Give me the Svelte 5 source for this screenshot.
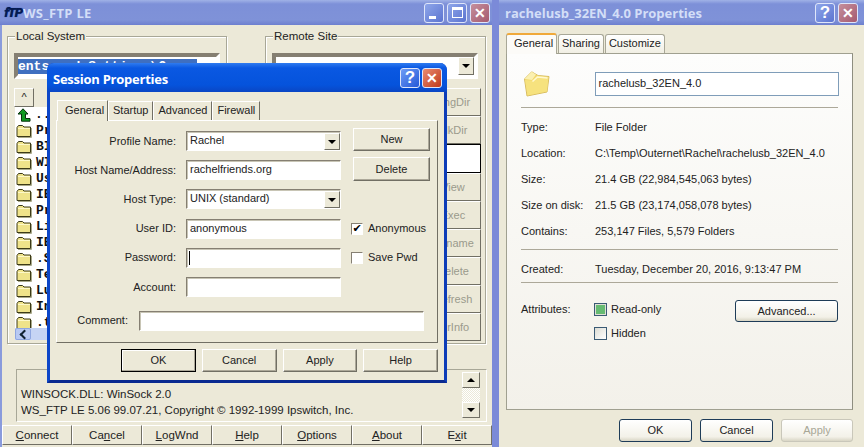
<script>
  const rows = ['..','Pr','BI','WI','Us','IE','Pr','Li','IE','.S','Te','Lu','In','.t'];
  const remoteBtns = ['MkDir','View','Exec','Rename','Delete','Refresh','DirInfo'];
  const actions = [
    ['','C','onnect'],['Ca','n','cel'],['','L','ogWnd'],['','H','elp'],['','O','ptions'],['','A','bout'],['E','x','it']
  ];
  const fields = [
    { label:'Profile Name:', value:'Rachel', kind:'combo' },
    { label:'Host Name/Address:', value:'rachelfriends.org', kind:'text' },
    { label:'Host Type:', value:'UNIX (standard)', kind:'combo' },
    { label:'User ID:', value:'anonymous', kind:'text' },
    { label:'Password:', value:'', kind:'caret' },
    { label:'Account:', value:'', kind:'text' }
  ];
  const info = [
    ['Type:','File Folder'],
    ['Location:','C:\\Temp\\Outernet\\Rachel\\rachelusb_32EN_4.0'],
    ['Size:','21.4 GB (22,984,545,063 bytes)'],
    ['Size on disk:','21.5 GB (23,174,058,078 bytes)'],
    ['Contains:','253,147 Files, 5,579 Folders']
  ];
</script>

{#snippet folder(w, h)}
  <svg width={w} height={h} viewBox="0 0 16 14" class="folder">
    <path d="M1 3.5 L2.5 1.5 H6.5 L8 3 H14.5 V12.5 H1 Z" fill="#efe38a" stroke="#3c3a18" stroke-width="1"/>
    <path d="M2 4.5 H14" stroke="#fdf8c8" stroke-width="1"/>
    <path d="M15.5 4 V13.5 H2" fill="none" stroke="#a9a98a" stroke-width="1"/>
  </svg>
{/snippet}

{#snippet bigFolder()}
  <svg width="27" height="26" viewBox="0 0 27 26" class="folder">
    <path d="M1.5 8 L8.7 .8 L15 4.5 L26 5.5 L24 21 L4 25 Z" fill="#f0d568" stroke="#d8bd62" stroke-width="1"/>
    <path d="M1.5 8 L8.7 .8 L13 3.5 L9 9 Z" fill="#fbf0b0"/>
    <path d="M2 9 L9 9.5 L14 4.5 L25.5 6 L24 20.5 L4.5 24.5 Z" fill="#f6e27e"/>
    <path d="M9.5 10.5 L14.5 6 L24.5 7" fill="none" stroke="#fff8d0" stroke-width="1.5"/>
  </svg>
{/snippet}

{#snippet arrow(dir)}
  <span class={'tri ' + dir}></span>
{/snippet}

<div class="desktop">
  <section class="ftp">
    <header class="title inactive">
      <span class="ftpicon">fTP</span>
      <span class="title-text ws">WS_FTP LE</span>
      <div class="ctrls">
        <span class="cb blue"><i class="min"></i></span>
        <span class="cb blue"><i class="max"></i></span>
        <span class="cb red">✕</span>
      </div>
    </header>
    <div class="ftp-body">
      <div class="panes">
        <div class="group local">
          <span class="legend">Local System</span>
          <div class="dos-combo"><span class="sel">ents and Settings\Owner</span></div>
          <button class="mini">^</button>
          <ul class="files">
            {#each rows as r, i}
              <li>
                {#if i === 0}
                  <svg width="15" height="14" viewBox="0 0 15 14" class="folder"><path d="M7 .8 L12 6 H9.5 V10.5 H14 V13.2 H5.5 V6 H2 Z" fill="#0f9a20" stroke="#07300c" stroke-width="1"/></svg>
                {:else}
                  {@render folder(16, 14)}
                {/if}
                <b>{r}</b>
              </li>
            {/each}
          </ul>
          <div class="hscroll"><span class="xpbtn"></span></div>
        </div>
        <div class="group remote">
          <span class="legend">Remote Site</span>
          <div class="dos-combo plain">
            <span class="dropbtn">{@render arrow('down')}</span>
          </div>
          <div class="side">
            <button class="sbtn">ChgDir</button>
            {#each remoteBtns as b, i}
              {#if i === 1}<div class="blackbox"></div>{/if}
              <button class="sbtn">{b}</button>
            {/each}
          </div>
        </div>
      </div>
      <div class="log">
        <div class="log-lines">
          <p>WINSOCK.DLL: WinSock 2.0</p>
          <p>WS_FTP LE 5.06 99.07.21, Copyright © 1992-1999 Ipswitch, Inc.</p>
        </div>
        <div class="log-scroll">
          <span class="lbtn">{@render arrow('up')}</span>
          <span class="ltrack"></span>
          <span class="lbtn">{@render arrow('down')}</span>
        </div>
      </div>
      <nav class="actions">
        {#each actions as a}
          <button class="act">{a[0]}<u>{a[1]}</u>{a[2]}</button>
        {/each}
      </nav>
    </div>

    <div class="dialog">
      <header class="dtitle">
        <span class="dtitle-text">Session Properties</span>
        <div class="ctrls dctrls">
          <span class="cb dhelp">?</span>
          <span class="cb dclose">✕</span>
        </div>
      </header>
      <div class="dbody">
        <div class="dtabs">
          <span class="dtab on">General</span>
          <span class="dtab">Startup</span>
          <span class="dtab">Advanced</span>
          <span class="dtab">Firewall</span>
        </div>
        <div class="dpage">
          <div class="form">
            {#each fields as f}
              <label class="lbl">{f.label}</label>
              <div class="inp">
                {#if f.kind === 'caret'}<i class="caret"></i>{/if}
                {f.value}
                {#if f.kind === 'combo'}<span class="dropbtn small">{@render arrow('down')}</span>{/if}
              </div>
            {/each}
          </div>
          <div class="dside">
            <button class="w98 new">New</button>
            <button class="w98 del">Delete</button>
            <div class="chk first"><span class="box">✔</span>Anonymous</div>
            <div class="chk"><span class="box"></span>Save Pwd</div>
          </div>
          <div class="comment">
            <label class="lbl">Comment:</label>
            <div class="inp wide"></div>
          </div>
        </div>
        <div class="dbtns">
          <button class="w98 ok">OK</button>
          <button class="w98">Cancel</button>
          <button class="w98">Apply</button>
          <button class="w98">Help</button>
        </div>
      </div>
    </div>
  </section>

  <section class="props">
    <header class="title inactive">
      <span class="title-text pr">rachelusb_32EN_4.0 Properties</span>
      <div class="ctrls">
        <span class="cb blue q">?</span>
        <span class="cb red">✕</span>
      </div>
    </header>
    <div class="props-body">
      <div class="ptabs">
        <span class="ptab on">General</span>
        <span class="ptab">Sharing</span>
        <span class="ptab">Customize</span>
      </div>
      <div class="ppage">
        <div class="pname">
          <span class="bigf">{@render bigFolder()}</span>
          <div class="pinput">rachelusb_32EN_4.0</div>
        </div>
        <hr class="first-hr" />
        <dl class="info">
          {#each info as row}
            <dt>{row[0]}</dt><dd>{row[1]}</dd>
          {/each}
        </dl>
        <hr class="h2" />
        <dl class="info created">
          <dt>Created:</dt><dd>Tuesday, December 20, 2016, 9:13:47 PM</dd>
        </dl>
        <hr class="h3" />
        <div class="attrs">
          <span class="attr-l">Attributes:</span>
          <div class="attr-c">
            <div class="xchk"><span class="xbox on"></span>Read-only</div>
            <div class="xchk h"><span class="xbox"></span>Hidden</div>
          </div>
          <button class="xp adv">Advanced...</button>
        </div>
      </div>
      <div class="pbtns">
        <button class="xp b">OK</button>
        <button class="xp b">Cancel</button>
        <button class="xp b dis">Apply</button>
      </div>
    </div>
  </section>
</div>

<style>
  :global(body) { margin: 0; }
  * { box-sizing: border-box; }
  .desktop {
    width: 864px; height: 447px; overflow: hidden; display: flex;
    background: #7b8ad8;
    font: 11px/13px "Liberation Sans", Arial, sans-serif; color: #222;
  }
  button { font: inherit; color: inherit; padding: 0; margin: 0; }
  .ftp { position: relative; width: 492px; height: 447px; flex: none; }
  .props { width: 365px; margin-left: 7px; flex: none; height: 447px; }

  .title { height: 25px; display: flex; align-items: center; position: relative; }
  .inactive { background: linear-gradient(#a0b2e6 0, #7d90d8 4px, #7f92d8 20px, #6d7fcf 25px); }
  .ftp .title { padding-left: 4px; }
  .ftpicon {
    font: italic 900 12px/14px "DejaVu Sans", sans-serif; color: #061a50; width: 19px; flex: none; letter-spacing: -1.5px;
    text-shadow: 0 0 1px #1a4ab0;
  }
  .title-text { font: bold 13px/16px "Open Sans", "Liberation Sans", sans-serif; color: #d3def7; }
  .ws { letter-spacing: .3px; }
  .pr { margin-left: 6px; }
  .ctrls { margin-left: auto; display: flex; gap: 3px; padding-right: 2px; }
  .cb {
    width: 20px; height: 20px; border-radius: 3px; border: 1px solid #dfe6fa;
    display: flex; align-items: center; justify-content: center; position: relative;
    color: #fff; font: bold 14px/1 "Liberation Sans", sans-serif;
  }
  .cb.blue { background: linear-gradient(135deg, #8ea6ea, #5c74d0); }
  .cb.q { font-size: 17px; }
  .cb.red { background: linear-gradient(135deg, #c58f9c, #a55a70); }
  .min { position: absolute; left: 4px; bottom: 3px; width: 7px; height: 3px; background: #fff; }
  .max { position: absolute; left: 4px; top: 3px; width: 11px; height: 11px; border: 1px solid #fff; border-top-width: 3px; }
  .props .ctrls { padding-right: 6px; }

  .ftp-body { height: 422px; background: #ece9d8; border-left: 2px solid #8a9bdc; }
  .panes { display: flex; padding: 11px 0 0 5px; gap: 38px; }
  .group {
    position: relative; height: 308px; border: 1px solid #a8a797; box-shadow: inset 1px 1px 0 #fff, 1px 1px 0 #fff;
    padding: 16px 6px 0 6px;
  }
  .local { width: 220px; }
  .remote { width: 221px; }
  .legend { position: absolute; left: 7px; top: -7px; background: #ece9d8; padding: 0 1px; font-size: 11.5px; }
  .dos-combo {
    height: 26px; width: 206px; border: 4px solid; border-color: #857f72 #fff #fff #857f72;
    background: #fff; position: relative; padding: 1px 0 0 0;
  }
  .dos-combo.plain { height: 26px; }
  .sel { display: block; width: 179px; height: 15px; margin: 1px 0 0 0; overflow: hidden;
    background: #3f6fc0; color: #fff; font: bold 13px/15px "Liberation Mono", monospace; white-space: nowrap; }
  .dropbtn {
    position: absolute; right: 0; top: 0; width: 16px; height: 18px; background: #ece9d8;
    border: 1px solid; border-color: #fff #716f64 #716f64 #fff;
    display: flex; align-items: center; justify-content: center;
  }
  .tri { display: block; width: 0; height: 0; border-left: 4px solid transparent; border-right: 4px solid transparent; }
  .tri.down { border-top: 4px solid #000; }
  .tri.up { border-bottom: 4px solid #000; }
  .mini {
    display: block; margin-top: 9px; width: 20px; height: 19px; background: #ece9d8; border: 1px solid;
    border-color: #fff #716f64 #716f64 #fff; font-size: 11px; line-height: 15px;
  }
  .files { list-style: none; margin: 0 0 0 1px; padding: 0; background: #fff; height: 221px; width: 190px; overflow: hidden; }
  .files li { height: 16px; display: flex; align-items: center; gap: 4px; padding-left: 1px; font: bold 13px/16px "Liberation Mono", monospace; color: #111; }
  .folder { flex: none; display: block; }
  .hscroll { margin-left: 1px; height: 12px; width: 190px; background: #c6d4f4; }
  .xpbtn { display: block; width: 16px; height: 12px; background: #b8c9f2; border: 1px solid #8ea6e0; border-radius: 2px; position: relative; }
  .xpbtn::after { content: ''; position: absolute; left: 5px; top: 2px; width: 5px; height: 5px; border-left: 2px solid #123; border-bottom: 2px solid #123; transform: rotate(45deg); }

  .side { margin: 9px 0 0 145px; display: flex; flex-direction: column; width: 64px; }
  .sbtn {
    height: 28px; flex: none; background: #ece9d8; border: 1px solid; border-color: #fff #716f64 #716f64 #fff;
    color: #9a9a8c; font-size: 11px; width: 64px; white-space: nowrap; text-align: center; padding-left: 8px;
  }
  .blackbox { height: 29px; background: #fff; border: 1px solid #000; flex: none; }

  .log {
    margin: 25px 0 0 14px; width: 471px; height: 53px; position: relative;
    border: 1px solid; border-color: #a8a797 #fff #fff #a8a797;
    display: flex; justify-content: space-between;
  }
  .log-lines { padding-top: 18px; padding-left: 4px; font-size: 11.5px; }
  .log-lines p { margin: 0 0 3px; line-height: 13px; white-space: nowrap; }
  .log-scroll { width: 18px; margin: 2px 6px 0 0; display: flex; flex-direction: column; }
  .lbtn { height: 16px; background: #ece9d8; border: 1px solid; border-color: #fff #716f64 #716f64 #fff; display: flex; align-items: center; justify-content: center; flex: none; }
  .ltrack { height: 14px; background: repeating-conic-gradient(#fff 0 25%, #ece9d8 0 50%) 0 0 / 2px 2px; flex: none; }
  .actions { display: flex; margin-top: 3px; height: 20px; }
  .act {
    width: 70px; height: 20px; background: #ece9d8; border: 1px solid; border-color: #fff #716f64 #716f64 #fff; font-size: 11.5px; flex: none;
  }

  .dialog {
    position: absolute; left: 47px; top: 63px; width: 400px; height: 320px;
    border-radius: 7px 7px 0 0; background: #0a3ec0; border: 3px solid; border-top: 0; border-color: #0d46c8 #0d3cb8 #0a2a90 #0d46c8;
    display: flex; flex-direction: column;
  }
  .dtitle {
    height: 29px; flex: none; display: flex; align-items: center; margin: 0 -3px; padding-left: 6px;
    background: linear-gradient(#2f7bf0 0, #0a58e2 5px, #0553dc 22px, #0a46c4 29px); border-radius: 7px 7px 0 0;
  }
  .dtitle-text { font: bold 13px/16px "Open Sans", "Liberation Sans", sans-serif; color: #fff; letter-spacing: -.25px; position: relative; top: 1px; }
  .dctrls { padding-right: 5px; gap: 2px; }
  .dhelp { background: linear-gradient(135deg, #6e9cf5, #2558d8); font-size: 17px; }
  .dclose { background: linear-gradient(135deg, #e88b70, #c03a1c); }
  .dbody { flex: 1; background: #ece9d8; padding: 8px 6px 0 6px; position: relative; }
  .dtabs { display: flex; height: 20px; align-items: flex-end; padding-left: 1px; }
  .dtab {
    height: 19px; padding: 2px 4px 0; border: 1px solid; border-bottom: 0; border-color: #fff #716f64 #fff #fff; background: #ece9d8;
  }
  .dtab.on { height: 21px; margin-bottom: -1px; position: relative; z-index: 1; padding: 3px 7px; width: 51px; }
  .dpage {
    height: 223px; border: 1px solid; border-color: #fff #716f64 #716f64 #fff; position: relative;
    display: grid; grid-template-columns: 281px 1fr; grid-template-rows: 182px 1fr;
  }
  .form {
    display: grid; grid-template-columns: 119px 155px; column-gap: 10px; row-gap: 9px;
    grid-auto-rows: 20.2px; padding-top: 10px; align-items: center;
  }
  .lbl { text-align: right; white-space: nowrap; }
  .inp {
    height: 20px; background: #fff; border: 1px solid; border-color: #857f72 #fff #fff #857f72; position: relative;
    padding: 2px 0 0 3px; box-shadow: inset 1px 1px 0 #c8c5b5;
  }
  .dropbtn.small { right: 0; top: 1px; height: 17px; }
  .caret { position: absolute; left: 2px; top: 2px; height: 14px; width: 1px; background: #000; display: block; }
  .dside { padding: 7px 0 0 15px; }
  .w98 {
    display: block; background: #ece9d8; border: 1px solid; border-color: #fff #716f64 #716f64 #fff;
    box-shadow: inset -1px -1px 0 #aca899; text-align: center;
  }
  .new { width: 77px; height: 23px; }
  .del { width: 77px; height: 24px; margin-top: 6px; }
  .chk { display: flex; align-items: center; gap: 5px; margin-left: -2px; height: 13px; white-space: nowrap; }
  .chk.first { margin-top: 41px; }
  .box {
    width: 12px; height: 12px; background: #fff; border: 1px solid; border-color: #857f72 #fff #fff #857f72;
    font: 11px/10px "DejaVu Sans", sans-serif; color: #000; text-align: center; flex: none; overflow: hidden;
  }
  .chk + .chk { margin-top: 16px; }
  .comment { grid-column: 1 / 3; display: grid; grid-template-columns: 71px 285px; column-gap: 11px; align-items: center; padding-bottom: 4px; }
  .inp.wide { height: 20px; }
  .dbtns { display: flex; gap: 6px; margin: 6px 0 0 65px; }
  .dbtns .w98 { width: 75px; height: 23px; }
  .ok { border: 1px solid #000 !important; box-shadow: inset -1px -1px 0 #aca899, inset 1px 1px 0 #fff; }

  .props-body { background: #ece9d8; height: 422px; padding: 8px 11px 0 7px; }
  .ptabs { display: flex; height: 20px; align-items: flex-end; }
  .ptab {
    height: 19px; padding: 2px 3px 0; border: 1px solid #a8a797; border-bottom: 0; border-radius: 3px 3px 0 0;
    background: linear-gradient(#fff, #f1efe4); margin-right: 1px;
  }
  .ptab.on { height: 21px; margin-bottom: -1px; position: relative; z-index: 1; background: #fcfbf8; border-top: 2px solid #f0a93a; padding: 2px 7px; width: 51px; }
  .ppage {
    height: 357px; width: 347px; border: 1px solid #a0a090; border-right-color: #8e8e80;
    background: linear-gradient(#fdfdfc, #f3f1ea); padding: 16px 13px 0 14px; position: relative;
  }
  .pname { display: flex; align-items: center; height: 27px; }
  .bigf { width: 74px; padding-left: 2px; }
  .pinput { width: 246px; height: 24px; border: 1px solid #7f9db9; background: #fff; padding: 4px 0 0 3px; }
  hr { border: 0; height: 1px; background: #aca899; margin: 0; width: 317px; }
  .first-hr { margin-top: 10px; }
  .info { margin: 12px 0 0; display: grid; grid-template-columns: 74px 1fr; grid-auto-rows: 26px; }
  .info dt, .info dd { margin: 0; line-height: 14px; }
  .h2 { margin-top: -1px; }
  .info.created { margin-top: 12px; }
  .h3 { margin-top: -6px; }
  .attrs { display: flex; margin-top: 13px; padding-top: 7px; position: relative; }
  .attr-l { width: 73px; }
  .xchk { display: flex; align-items: center; gap: 4px; height: 13px; }
  .xchk.h { margin-top: 11px; }
  .xbox { width: 13px; height: 13px; border: 1px solid #3a5a74; background: linear-gradient(135deg, #dcdcd4, #fff); display: block; position: relative; flex: none; }
  .xbox.on { background: #66bb72; box-shadow: inset 0 0 0 1px #e0e0d6; }
  .xp {
    background: linear-gradient(#fff, #f3f1e8 80%, #d8d5c4); border: 1px solid #1e3c58; border-radius: 3px;
  }
  .adv { position: absolute; left: 214px; top: 4px; width: 103px; height: 22px; }
  .pbtns { display: flex; justify-content: flex-end; gap: 8px; margin-top: 9px; width: 347px; }
  .b { width: 73px; height: 23px; }
  .b.dis { width: 72px; color: #a8a797; border-color: #c9c7ba; }
</style>
